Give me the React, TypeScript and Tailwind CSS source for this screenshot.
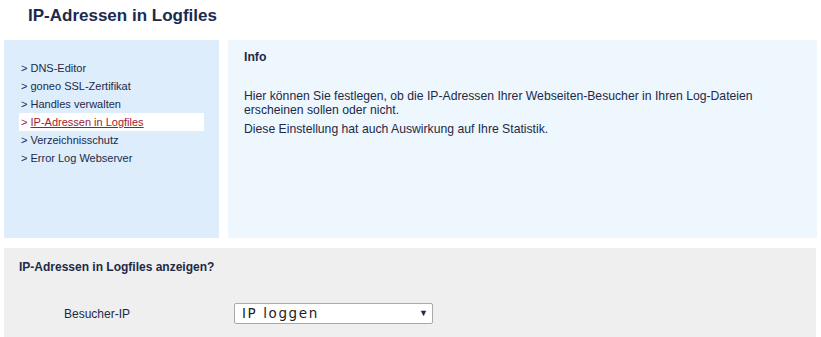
import React from "react";

const items = [
  "DNS-Editor",
  "goneo SSL-Zertifikat",
  "Handles verwalten",
  "IP-Adressen in Logfiles",
  "Verzeichnisschutz",
  "Error Log Webserver",
];

export default function App() {
  return (
    <div
      className="w-[821px] h-[337px] bg-white overflow-hidden text-[#1c2a48]"
      style={{ fontFamily: '"Liberation Sans", Arial, sans-serif' }}
    >
      <div className="h-[40px] pl-[28px] pt-[6px]">
        <h1 className="text-[17px] leading-[20px] font-bold text-[#1a2a4e]">IP-Adressen in Logfiles</h1>
      </div>
      <div className="flex pl-[4px] gap-[9px]">
        <div className="w-[215px] h-[198px] bg-[#ddedfc] pt-[19px] pl-[15px]">
          <ul className="w-[185px]">
            {items.map((it, i) => (
              <li
                key={it}
                className={
                  "h-[18px] leading-[18px] text-[11px] pl-[2px] " +
                  (i === 3 ? "bg-white text-[#a11a30]" : "")
                }
              >
                {"> "}
                <span className={i === 3 ? "underline" : ""}>{it}</span>
              </li>
            ))}
          </ul>
        </div>
        <div className="w-[589px] h-[198px] bg-[#eef6fe] pt-[10px] pl-[16px] text-[12.2px]">
          <div className="font-bold leading-[14px]">Info</div>
          <p className="mt-[25px] leading-[14px] w-[540px]">
            Hier können Sie festlegen, ob die IP-Adressen Ihrer Webseiten-Besucher in Ihren Log-Dateien
            erscheinen sollen oder nicht.
          </p>
          <p className="mt-[5px] leading-[14px]">Diese Einstellung hat auch Auswirkung auf Ihre Statistik.</p>
        </div>
      </div>
      <div className="ml-[4px] mt-[10px] w-[812px] h-[89px] bg-[#efefef] pt-[12px] pl-[15px] text-[12px]">
        <div className="font-bold leading-[14px]">IP-Adressen in Logfiles anzeigen?</div>
        <div className="flex items-center mt-[29px]">
          <div className="w-[215px] pl-[45px]">Besucher-IP</div>
          <div className="w-[199px] h-[21px] bg-white border border-[#a9a9a9] rounded-[2px] flex items-center justify-between pl-[7px] pr-[4px]">
            <span
              className="text-[13.5px] tracking-[1.6px] text-[#222]"
              style={{ fontFamily: '"DejaVu Sans", Verdana, sans-serif' }}
            >
              IP loggen
            </span>
            <span className="text-[9px] text-[#1c2a48]">▼</span>
          </div>
        </div>
      </div>
    </div>
  );
}
